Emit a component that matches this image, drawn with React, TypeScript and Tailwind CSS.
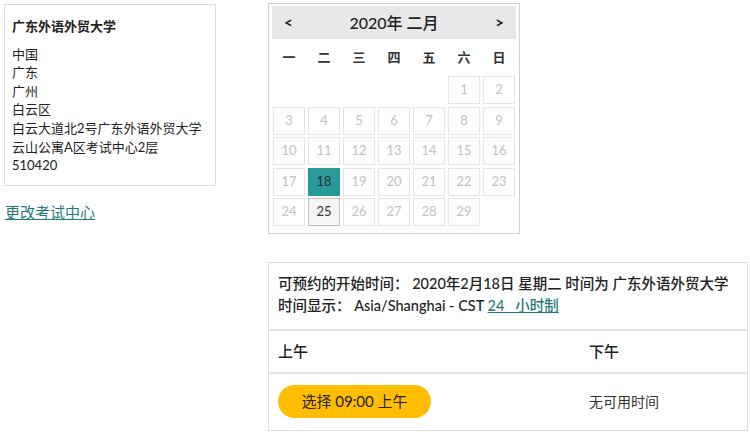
import React from 'react';

const font = { fontFamily: 'Lato, "Noto Sans CJK SC", sans-serif' };

const weekdays = ['一', '二', '三', '四', '五', '六', '日'];

function DayCell({ day }: { day: number | null }) {
  if (day === null) return <div className="h-[28px]" />;
  if (day === 18) {
    return (
      <div className="h-[28px] flex items-center justify-center bg-[#2a9a99] border border-[#2a9a99] text-[13px] text-[#1b2f33]">
        {day}
      </div>
    );
  }
  if (day === 25) {
    return (
      <div className="h-[28px] flex items-center justify-center bg-[#f5f5f5] border border-[#bdbdbd] text-[13px] text-[#333]">
        {day}
      </div>
    );
  }
  return (
    <div className="h-[28px] flex items-center justify-center bg-white border border-[#e6e6e6] text-[13px] text-[#c2c2c2]">
      {day}
    </div>
  );
}

function Calendar() {
  const cells: (number | null)[] = [null, null, null, null, null];
  for (let d = 1; d <= 29; d++) cells.push(d);
  return (
    <div className="w-[252px] border border-[#d0d0d0] bg-white px-[3px] pt-[2px] pb-[7px]">
      <div className="h-[33px] bg-[#e8e8e8] flex items-center justify-between px-[12px] text-[#222]">
        <span className="text-[15px] font-bold">&lt;</span>
        <span className="text-[16px] font-medium">2020年 二月</span>
        <span className="text-[15px] font-bold">&gt;</span>
      </div>
      <div className="grid grid-cols-7 gap-x-[3px] w-[242px] ml-[1px] h-[37px] items-center">
        {weekdays.map((w) => (
          <div key={w} className="text-center text-[13px] font-bold text-[#333]">
            {w}
          </div>
        ))}
      </div>
      <div className="grid grid-cols-7 gap-x-[3px] gap-y-[2.5px] w-[242px] ml-[1px]">
        {cells.map((d, i) => (
          <DayCell key={i} day={d} />
        ))}
      </div>
    </div>
  );
}

export default function App() {
  return (
    <div className="flex pl-[4px] pt-[3px] bg-white min-h-[447px] text-[#222]" style={font}>
      <div className="w-[212px] pt-[1px]">
        <div className="border border-[#dcdcdc] px-[7px] pt-[12px] pb-[10px] text-[13px] leading-[18.6px]">
          <div className="font-bold mb-[9px]">广东外语外贸大学</div>
          <div>中国</div>
          <div>广东</div>
          <div>广州</div>
          <div>白云区</div>
          <div>白云大道北2号广东外语外贸大学</div>
          <div>云山公寓A区考试中心2层</div>
          <div>510420</div>
        </div>
        <a href="#" className="block mt-[15px] ml-[1px] text-[15px] text-[#1f7b7b] underline">
          更改考试中心
        </a>
      </div>

      <div className="ml-[52px] w-[480px] flex flex-col">
        <Calendar />
        <div className="mt-[28px] border border-[#dedede] text-[15px]">
          <div className="px-[9px] pt-[10px] pb-[12px] border-b-2 border-[#e2e2e2] leading-[22px] font-medium whitespace-nowrap">
            <div className="text-[14.5px]">可预约的开始时间： 2020年2月18日 星期二 时间为 广东外语外贸大学</div>
            <div className="text-[14.5px]">
              时间显示： Asia/Shanghai - CST{' '}
              <a href="#" className="text-[#1f7b7b] underline">24&nbsp;&nbsp;&nbsp;小时制</a>
            </div>
          </div>
          <div className="flex h-[43px] items-center border-b-2 border-[#e2e2e2] font-medium">
            <div className="w-[311px] pl-[9px]">上午</div>
            <div className="pl-[9px]">下午</div>
          </div>
          <div className="flex items-center pt-[11px] pb-[12px]">
            <div className="w-[311px] pl-[9px]">
              <button className="h-[33px] w-[153px] rounded-full bg-[#ffbe00] text-[15px] text-[#222]">
                选择 09:00 上午
              </button>
            </div>
            <div className="pl-[9px] text-[14px] text-[#333]">无可用时间</div>
          </div>
        </div>
      </div>
    </div>
  );
}
